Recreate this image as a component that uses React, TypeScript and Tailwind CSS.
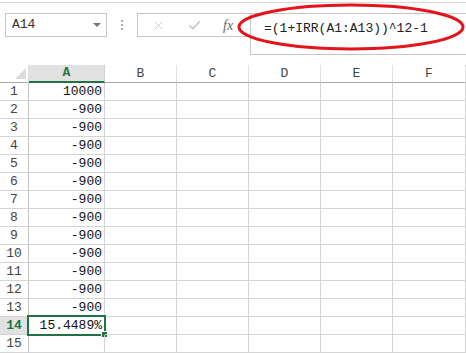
import { Check, X } from "lucide-react";

const cols = ["A", "B", "C", "D", "E", "F"];

const values: Record<number, string> = {
  1: "10000",
  2: "-900",
  3: "-900",
  4: "-900",
  5: "-900",
  6: "-900",
  7: "-900",
  8: "-900",
  9: "-900",
  10: "-900",
  11: "-900",
  12: "-900",
  13: "-900",
  14: "15.4489%",
};

const rows = Array.from({ length: 15 }, (_, i) => i + 1);

export default function App() {
  return (
    <div className="relative w-[466px] h-[353px] overflow-hidden bg-white font-['Liberation_Mono',monospace] text-[13px] text-[#222]">
      <div className="h-[2px]" />
      <div className="h-px bg-[#d8d8d8]" />

      {/* Formula bar */}
      <div className="flex items-start mt-[10px] h-[42px]">
        <div className="ml-[5px] w-[102px] h-[24px] border border-[#c6c6c6] flex items-center pl-[6px] pr-[5px]">
          <span className="flex-1 text-[#333]">A14</span>
          <svg width="8" height="4" viewBox="0 0 8 4">
            <polygon points="0,0 8,0 4,4" fill="#777" />
          </svg>
        </div>

        <div className="w-[30px] h-[24px] flex flex-col items-center justify-center gap-[2px]">
          <div className="w-[2px] h-[2px] bg-[#aaa]" />
          <div className="w-[2px] h-[2px] bg-[#aaa]" />
          <div className="w-[2px] h-[2px] bg-[#aaa]" />
        </div>

        <div className="w-[113px] h-[24px] border border-r-0 border-[#c6c6c6] flex items-center">
          <X size={13} strokeWidth={1.5} color="#c4c4c4" className="ml-[14px]" />
          <Check size={15} strokeWidth={2.5} color="#c4c4c4" className="ml-[22px]" />
          <span className="ml-[21px] font-['Liberation_Serif',serif] italic text-[14px] text-[#666]">
            fx
          </span>
        </div>

        <div className="flex-1 h-[42px] border border-r-0 border-[#c6c6c6] pl-[13px] pt-[5px] text-[13px] text-[#222]">
          =(1+IRR(A1:A13))^12-1
        </div>
      </div>

      {/* Sheet */}
      <div className="mt-[10px] grid grid-cols-[29px_76px_72px_72px_72px_72px_73px]">
        <div className="h-[18px] border-r border-b border-r-[#dcdcdc] border-b-[#ababab] relative">
          <svg className="absolute left-[15px] top-[3px]" width="11" height="11" viewBox="0 0 11 11">
            <polygon points="11,0 11,11 0,11" fill="#dcdcdc" />
          </svg>
        </div>
        {cols.map((c) =>
          c === "A" ? (
            <div
              key={c}
              className="h-[18px] bg-[#e1e1e1] border-r border-r-[#d0d0d0] border-b-2 border-b-[#217346] flex items-center justify-center font-bold text-[#217346]"
            >
              {c}
            </div>
          ) : (
            <div
              key={c}
              className="h-[18px] border-r border-b border-r-[#e0e0e0] border-b-[#ababab] flex items-center justify-center text-[#444]"
            >
              {c}
            </div>
          )
        )}

        {rows.map((r) => {
          const sel = r === 14;
          return [
            <div
              key={`h${r}`}
              className={`h-[18px] border-b border-r flex items-center justify-center ${
                sel
                  ? "bg-[#e1e1e1] font-bold text-[#217346] border-b-[#d4d4d4] border-r-[#217346]"
                  : "text-[#444] border-b-[#d4d4d4] border-r-[#c4c4c4]"
              }`}
            >
              {r}
            </div>,
            ...cols.map((c) => (
              <div
                key={`${c}${r}`}
                className="relative h-[18px] border-r border-b border-[#d4d4d4] flex items-center justify-end pr-[2px] text-[#111]"
              >
                {c === "A" ? values[r] ?? "" : ""}
                {c === "A" && sel && (
                  <>
                    <div className="absolute -inset-[2px] border-2 border-[#217346]" />
                    <div className="absolute -right-[4px] -bottom-[4px] w-[7px] h-[7px] bg-[#217346] border border-white" />
                  </>
                )}
              </div>
            )),
          ];
        })}
      </div>

      {/* Red annotation */}
      <svg className="absolute left-0 top-0 pointer-events-none" width="466" height="60">
        <ellipse cx="351" cy="27" rx="112" ry="22" fill="none" stroke="#e3141b" strokeWidth="3" />
      </svg>
    </div>
  );
}
